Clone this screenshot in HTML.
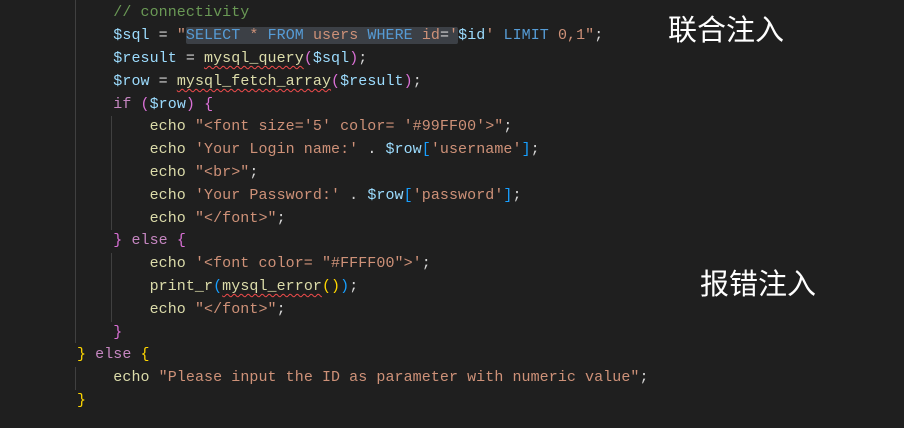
<!DOCTYPE html>
<html><head><meta charset="utf-8"><style>
html,body{margin:0;padding:0;background:#1f1f1f;width:904px;height:428px;overflow:hidden;position:relative}
.code{position:absolute;left:77px;top:2.4px;font-family:"Liberation Mono",monospace;font-size:15px;line-height:22.8px;white-space:pre;color:#d4d4d4;letter-spacing:0.07px}
.v{color:#9cdcfe}.s{color:#ce9178}.k{color:#c586c0}.f{color:#dcdcaa}.c{color:#6a9955}.b1{color:#ffd700}.b2{color:#da70d6}.b3{color:#179fff}.kw{color:#569cd6}
.hl{background:#3c4046;border-radius:2px}
.sq{text-decoration:underline wavy #f14c4c;text-decoration-thickness:1px;text-underline-offset:3px}
.g{position:absolute;width:1px;background:#404040}
.cn{position:absolute;color:#fff;font-family:"Liberation Sans","Noto Sans CJK SC",sans-serif;font-size:29px;line-height:32px}
</style></head><body>
<div class="g" style="left:75px;top:0;height:343px"></div>
<div class="g" style="left:111px;top:116px;height:114px"></div>
<div class="g" style="left:111px;top:253px;height:69px"></div>
<div class="g" style="left:75px;top:367px;height:23px"></div>
<div class="code"><span class="c">    // connectivity</span>
    <span class="v">$sql</span> = <span class="s">"</span><span class="hl"><span class="kw">SELECT</span> <span class="s">*</span> <span class="kw">FROM</span> <span class="s">users</span> <span class="kw">WHERE</span> <span class="s">id</span>=<span class="s">'</span></span><span class="v">$id</span><span class="s">'</span> <span class="kw">LIMIT</span> <span class="s">0,1"</span>;
    <span class="v">$result</span> = <span class="f sq">mysql_query</span><span class="b2">(</span><span class="v">$sql</span><span class="b2">)</span>;
    <span class="v">$row</span> = <span class="f sq">mysql_fetch_array</span><span class="b2">(</span><span class="v">$result</span><span class="b2">)</span>;
    <span class="k">if</span> <span class="b2">(</span><span class="v">$row</span><span class="b2">)</span> <span class="b2">{</span>
        <span class="f">echo</span> <span class="s">"&lt;font size='5' color= '#99FF00'&gt;"</span>;
        <span class="f">echo</span> <span class="s">'Your Login name:'</span> . <span class="v">$row</span><span class="b3">[</span><span class="s">'username'</span><span class="b3">]</span>;
        <span class="f">echo</span> <span class="s">"&lt;br&gt;"</span>;
        <span class="f">echo</span> <span class="s">'Your Password:'</span> . <span class="v">$row</span><span class="b3">[</span><span class="s">'password'</span><span class="b3">]</span>;
        <span class="f">echo</span> <span class="s">"&lt;/font&gt;"</span>;
    <span class="b2">}</span> <span class="k">else</span> <span class="b2">{</span>
        <span class="f">echo</span> <span class="s">'&lt;font color= "#FFFF00"&gt;'</span>;
        <span class="f">print_r</span><span class="b3">(</span><span class="f sq">mysql_error</span><span class="b1">()</span><span class="b3">)</span>;
        <span class="f">echo</span> <span class="s">"&lt;/font&gt;"</span>;
    <span class="b2">}</span>
<span class="b1">}</span> <span class="k">else</span> <span class="b1">{</span>
    <span class="f">echo</span> <span class="s">"Please input the ID as parameter with numeric value"</span>;
<span class="b1">}</span></div>
<div class="cn" style="left:668px;top:15px">联合注入</div>
<div class="cn" style="left:700px;top:269px">报错注入</div>
</body></html>
